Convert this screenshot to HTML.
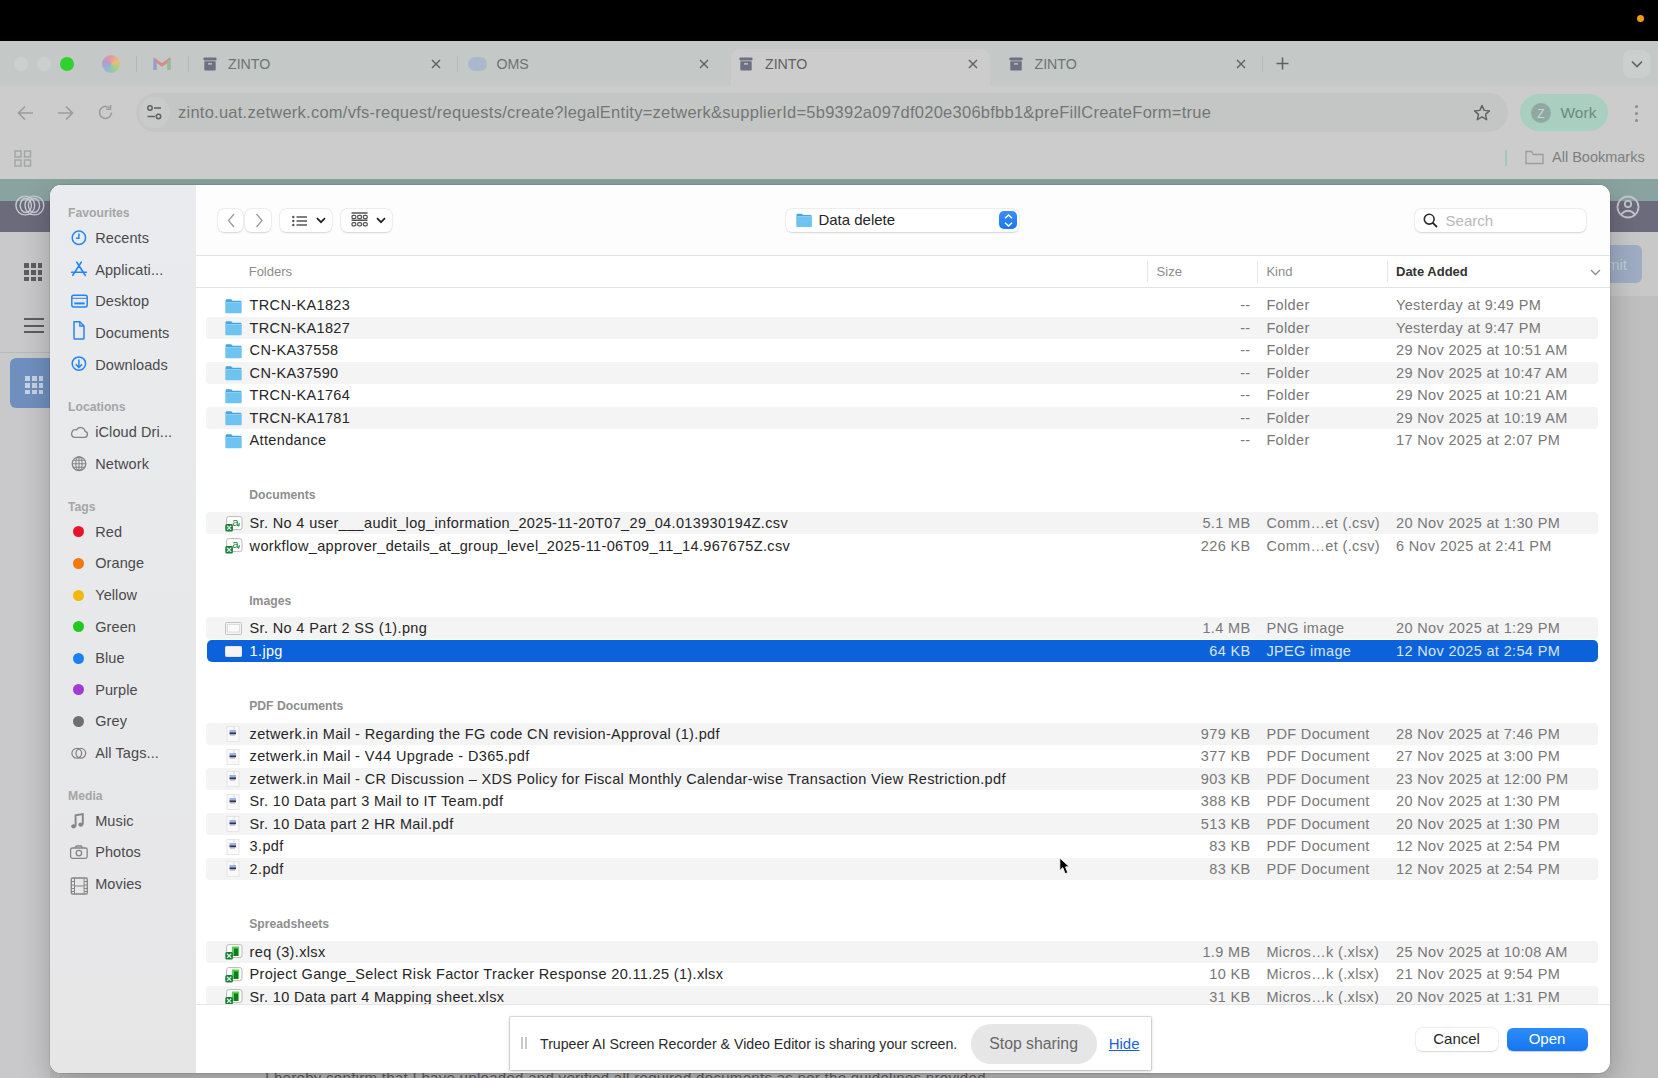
<!DOCTYPE html>
<html><head><meta charset="utf-8"><title>Open</title>
<style>
html,body{margin:0;padding:0;width:1658px;height:1078px;overflow:hidden;background:#c9c9cb;}
body{position:relative;font-family:"Liberation Sans",sans-serif;}
.r{position:absolute;}
.t{position:absolute;white-space:nowrap;}
svg.r{overflow:visible;}
</style></head><body>
<div class="r" style="left:0px;top:0px;width:1658px;height:41px;background:#000;"></div>
<div class="r" style="left:1637px;top:14.5px;width:7px;height:7px;border-radius:50%;background:#f29a1c"></div>
<div class="r" style="left:0px;top:41px;width:1658px;height:45px;background:#c4c9c7;"></div>
<div class="r" style="left:0px;top:86px;width:1658px;height:93px;background:#cbcccb;"></div>
<div class="r" style="left:731px;top:49px;width:259px;height:40px;background:#cbcccb;border-radius:9px 9px 0 0"></div>
<div class="r" style="left:14px;top:57px;width:14px;height:14px;border-radius:50%;background:#cbcfcd;"></div>
<div class="r" style="left:37px;top:57px;width:14px;height:14px;border-radius:50%;background:#cbcfcd;"></div>
<div class="r" style="left:59.5px;top:57px;width:14px;height:14px;border-radius:50%;background:#2fd12f;"></div>
<div class="r" style="left:102px;top:55px;width:18px;height:18px;border-radius:50%;background:conic-gradient(#e59a9a,#e6c07a,#9ccf8f,#8fb8d8,#b59ad0,#e59a9a)"></div>
<div class="r" style="left:136px;top:56px;width:1px;height:16px;background:#b5bab8;"></div>
<svg class="r" style="left:153px;top:57px" width="18" height="14" viewBox="0 0 18 14"><path d="M2 13V3l7 5 7-5v10" fill="none" stroke="#d88a8a" stroke-width="3"/><path d="M2 13V3" stroke="#8aa3d6" stroke-width="3"/><path d="M16 13V3" stroke="#8cc29a" stroke-width="3"/></svg>
<div class="r" style="left:188px;top:56px;width:1px;height:16px;background:#b5bab8;"></div>
<svg class="r" style="left:203px;top:57px" width="14" height="14" viewBox="0 0 14 14"><rect x="0.5" y="0.5" width="13" height="3" rx="0.8" fill="#6e7082"/><rect x="1.3" y="4.3" width="11.4" height="9.2" rx="0.8" fill="#6e7082"/><rect x="5" y="6.2" width="4" height="1.4" fill="#c4c9c7"/></svg>
<div class="t" style="top:57.18px;font-size:14.2px;line-height:14.2px;color:#6f7372;left:228.00px;">ZINTO</div>
<svg class="r" style="left:431px;top:59px" width="10" height="10" viewBox="0 0 10 10"><path d="M1 1L9 9M9 1L1 9" stroke="#5d6160" stroke-width="1.4"/></svg>
<div class="r" style="left:457px;top:56px;width:1px;height:16px;background:#b5bab8;"></div>
<div class="r" style="left:468px;top:57px;width:19px;height:14px;border-radius:7px;background:#a9b8cf"></div>
<div class="t" style="top:57.18px;font-size:14.2px;line-height:14.2px;color:#6f7372;left:496.50px;">OMS</div>
<svg class="r" style="left:699px;top:59px" width="10" height="10" viewBox="0 0 10 10"><path d="M1 1L9 9M9 1L1 9" stroke="#5d6160" stroke-width="1.4"/></svg>
<svg class="r" style="left:739px;top:57px" width="14" height="14" viewBox="0 0 14 14"><rect x="0.5" y="0.5" width="13" height="3" rx="0.8" fill="#6e7082"/><rect x="1.3" y="4.3" width="11.4" height="9.2" rx="0.8" fill="#6e7082"/><rect x="5" y="6.2" width="4" height="1.4" fill="#c4c9c7"/></svg>
<div class="t" style="top:57.18px;font-size:14.2px;line-height:14.2px;color:#5f6362;left:765.00px;">ZINTO</div>
<svg class="r" style="left:968px;top:59px" width="10" height="10" viewBox="0 0 10 10"><path d="M1 1L9 9M9 1L1 9" stroke="#5d6160" stroke-width="1.4"/></svg>
<svg class="r" style="left:1009px;top:57px" width="14" height="14" viewBox="0 0 14 14"><rect x="0.5" y="0.5" width="13" height="3" rx="0.8" fill="#6e7082"/><rect x="1.3" y="4.3" width="11.4" height="9.2" rx="0.8" fill="#6e7082"/><rect x="5" y="6.2" width="4" height="1.4" fill="#c4c9c7"/></svg>
<div class="t" style="top:57.18px;font-size:14.2px;line-height:14.2px;color:#6f7372;left:1034.50px;">ZINTO</div>
<svg class="r" style="left:1236px;top:59px" width="10" height="10" viewBox="0 0 10 10"><path d="M1 1L9 9M9 1L1 9" stroke="#5d6160" stroke-width="1.4"/></svg>
<div class="r" style="left:1262px;top:56px;width:1px;height:16px;background:#b5bab8;"></div>
<svg class="r" style="left:1276px;top:57px" width="13" height="13" viewBox="0 0 13 13"><path d="M6.5 0.5V12.5M0.5 6.5H12.5" stroke="#5d6160" stroke-width="1.5"/></svg>
<div class="r" style="left:1623px;top:50px;width:27px;height:28px;border-radius:8px;background:#cbcfcd"></div>
<svg class="r" style="left:1631px;top:60px" width="12" height="8" viewBox="0 0 12 8"><path d="M1 1.5L6 6.5L11 1.5" fill="none" stroke="#5d6160" stroke-width="1.6"/></svg>
<svg class="r" style="left:17px;top:105px" width="17" height="16" viewBox="0 0 17 16"><path d="M16 8H2M8 1.5L1.5 8L8 14.5" fill="none" stroke="#9a9d9c" stroke-width="1.6"/></svg>
<svg class="r" style="left:57px;top:105px" width="17" height="16" viewBox="0 0 17 16"><path d="M1 8H15M9 1.5L15.5 8L9 14.5" fill="none" stroke="#9a9d9c" stroke-width="1.6"/></svg>
<svg class="r" style="left:97px;top:104px" width="17" height="17" viewBox="0 0 17 17"><path d="M14.5 8.5A6 6 0 1 1 12.5 4" fill="none" stroke="#9a9d9c" stroke-width="1.6"/><path d="M13.5 1V5.2H9.3" fill="none" stroke="#9a9d9c" stroke-width="1.6"/></svg>
<div class="r" style="left:136px;top:93px;width:1372px;height:39px;border-radius:20px;background:#c3c6c5"></div>
<div class="r" style="left:139px;top:97px;width:31px;height:31px;border-radius:50%;background:#c8cbca"></div>
<svg class="r" style="left:146px;top:104px" width="17" height="17" viewBox="0 0 17 17"><circle cx="4" cy="4" r="2.2" fill="none" stroke="#5d6160" stroke-width="1.5"/><path d="M8 4H15" stroke="#5d6160" stroke-width="1.5"/><circle cx="12.5" cy="12.5" r="2.2" fill="none" stroke="#5d6160" stroke-width="1.5"/><path d="M1.5 12.5H9" stroke="#5d6160" stroke-width="1.5"/></svg>
<div class="t" style="top:104.33px;font-size:16.5px;line-height:16.5px;color:#737675;letter-spacing:0.25px;left:178.00px;">zinto.uat.zetwerk.com/vfs-request/requests/create?legalEntity=zetwerk&amp;supplierId=5b9392a097df020e306bfbb1&amp;preFillCreateForm=true</div>
<svg class="r" style="left:1473px;top:104px" width="18" height="18" viewBox="0 0 18 18"><path d="M9 1.5L11.2 6.4L16.5 6.9L12.5 10.4L13.7 15.7L9 12.9L4.3 15.7L5.5 10.4L1.5 6.9L6.8 6.4Z" fill="none" stroke="#5d6160" stroke-width="1.4" stroke-linejoin="round"/></svg>
<div class="r" style="left:1520px;top:94px;width:88px;height:37px;border-radius:19px;background:#a9cfc1"></div>
<div class="r" style="left:1531px;top:103px;width:20px;height:20px;border-radius:50%;background:#8fa9a2"></div>
<div class="t" style="top:107.84px;font-size:12px;line-height:12px;color:#c9d6d2;left:1341.00px;width:400px;text-align:center;">Z</div>
<div class="t" style="top:105.38px;font-size:15.5px;line-height:15.5px;color:#6d8a82;left:1560.50px;">Work</div>
<div class="r" style="left:1634.5px;top:104.5px;width:3px;height:3px;border-radius:50%;background:#888b8a"></div>
<div class="r" style="left:1634.5px;top:111.5px;width:3px;height:3px;border-radius:50%;background:#888b8a"></div>
<div class="r" style="left:1634.5px;top:118.5px;width:3px;height:3px;border-radius:50%;background:#888b8a"></div>
<svg class="r" style="left:14px;top:150px" width="18" height="17" viewBox="0 0 18 17"><rect x="1" y="1" width="6" height="6" fill="none" stroke="#a3a6a5" stroke-width="1.5"/><rect x="10.5" y="1" width="6" height="6" fill="none" stroke="#a3a6a5" stroke-width="1.5"/><rect x="1" y="10" width="6" height="6" fill="none" stroke="#a3a6a5" stroke-width="1.5"/><rect x="10.5" y="10" width="6" height="6" fill="none" stroke="#a3a6a5" stroke-width="1.5"/></svg>
<div class="r" style="left:1505px;top:150px;width:1.5px;height:16px;background:#9fc9bb;"></div>
<svg class="r" style="left:1525px;top:150px" width="19" height="15" viewBox="0 0 19 15"><path d="M1 2.5V13.5H18V4.5H8.5L6.5 1.5H1Z" fill="none" stroke="#9a9d9c" stroke-width="1.3"/></svg>
<div class="t" style="top:150.23px;font-size:14.5px;line-height:14.5px;color:#7d807f;left:1552.00px;">All Bookmarks</div>
<div class="r" style="left:0px;top:179px;width:1658px;height:22px;background:#89a4a0;"></div>
<div class="r" style="left:0px;top:201px;width:1658px;height:31px;background:#6b6b7c;"></div>
<div class="r" style="left:0px;top:232px;width:1658px;height:846px;background:#c9c9cb;"></div>
<div class="r" style="left:50px;top:232px;width:1608px;height:64px;background:#c8c8c9;"></div>
<div class="r" style="left:50px;top:296px;width:1608px;height:1px;background:#c0c0c1;"></div>
<div class="r" style="left:50px;top:297px;width:1608px;height:781px;background:#bfbfc0;"></div>
<svg class="r" style="left:10px;top:192px" width="40" height="28" viewBox="0 0 40 28"><circle cx="15.3" cy="13.5" r="9.4" fill="none" stroke="#c9cbd3" stroke-width="1.4"/><ellipse cx="15.8" cy="13.5" rx="5.6" ry="7" fill="none" stroke="#c9cbd3" stroke-width="1.4"/><circle cx="24.4" cy="13.5" r="9.4" fill="none" stroke="#c9cbd3" stroke-width="1.4"/><ellipse cx="24" cy="13.5" rx="5.6" ry="7" fill="none" stroke="#c9cbd3" stroke-width="1.4"/></svg>
<svg class="r" style="left:1615px;top:195px" width="26" height="24" viewBox="0 0 26 24"><circle cx="13" cy="12" r="10.5" fill="none" stroke="#c3c5cc" stroke-width="1.8"/><circle cx="13" cy="9" r="3.2" fill="none" stroke="#c3c5cc" stroke-width="1.8"/><path d="M6 19.5Q13 12 20 19.5" fill="none" stroke="#c3c5cc" stroke-width="1.8"/></svg>
<div class="r" style="left:24.0px;top:263.0px;width:4.8px;height:4.8px;background:#5e5e60;"></div>
<div class="r" style="left:30.8px;top:263.0px;width:4.8px;height:4.8px;background:#5e5e60;"></div>
<div class="r" style="left:37.6px;top:263.0px;width:4.8px;height:4.8px;background:#5e5e60;"></div>
<div class="r" style="left:24.0px;top:269.8px;width:4.8px;height:4.8px;background:#5e5e60;"></div>
<div class="r" style="left:30.8px;top:269.8px;width:4.8px;height:4.8px;background:#5e5e60;"></div>
<div class="r" style="left:37.6px;top:269.8px;width:4.8px;height:4.8px;background:#5e5e60;"></div>
<div class="r" style="left:24.0px;top:276.6px;width:4.8px;height:4.8px;background:#5e5e60;"></div>
<div class="r" style="left:30.8px;top:276.6px;width:4.8px;height:4.8px;background:#5e5e60;"></div>
<div class="r" style="left:37.6px;top:276.6px;width:4.8px;height:4.8px;background:#5e5e60;"></div>
<div class="r" style="left:24px;top:318.0px;width:20px;height:2px;background:#5e5e60;"></div>
<div class="r" style="left:24px;top:324.5px;width:20px;height:2px;background:#5e5e60;"></div>
<div class="r" style="left:24px;top:331.0px;width:20px;height:2px;background:#5e5e60;"></div>
<div class="r" style="left:0px;top:352px;width:50px;height:1px;background:#b9b9ba;"></div>
<div class="r" style="left:10px;top:358px;width:45px;height:50px;border-radius:6px;background:#6f90bf"></div>
<div class="r" style="left:25.0px;top:376.0px;width:4.8px;height:4.8px;background:#c9d3e3;"></div>
<div class="r" style="left:31.8px;top:376.0px;width:4.8px;height:4.8px;background:#c9d3e3;"></div>
<div class="r" style="left:38.6px;top:376.0px;width:4.8px;height:4.8px;background:#c9d3e3;"></div>
<div class="r" style="left:25.0px;top:382.8px;width:4.8px;height:4.8px;background:#c9d3e3;"></div>
<div class="r" style="left:31.8px;top:382.8px;width:4.8px;height:4.8px;background:#c9d3e3;"></div>
<div class="r" style="left:38.6px;top:382.8px;width:4.8px;height:4.8px;background:#c9d3e3;"></div>
<div class="r" style="left:25.0px;top:389.6px;width:4.8px;height:4.8px;background:#c9d3e3;"></div>
<div class="r" style="left:31.8px;top:389.6px;width:4.8px;height:4.8px;background:#c9d3e3;"></div>
<div class="r" style="left:38.6px;top:389.6px;width:4.8px;height:4.8px;background:#c9d3e3;"></div>
<div class="r" style="left:1610px;top:245px;width:32px;height:38px;border-radius:0 6px 6px 0;background:#9eadc4"></div>
<div class="t" style="top:257.30px;font-size:15px;line-height:15px;color:#c3ccda;right:31.00px;text-align:right;">Submit</div>
<div class="t" style="top:1070.30px;font-size:15px;line-height:15px;color:#606060;letter-spacing:0.3px;left:265.00px;">I hereby confirm that I have uploaded and verified all required documents as per the guidelines provided.</div>
<div class="r" style="left:0;top:179px;width:1658px;height:899px;overflow:hidden"><div class="r" style="left:50px;top:6px;width:1560px;height:887.5px;border-radius:11px;background:#fff;box-shadow:0 0 0 0.5px rgba(0,0,0,0.16),0 10px 30px rgba(0,0,0,0.24);overflow:hidden"><div class="r" style="left:0;top:0;width:146px;height:100%;background:linear-gradient(#eaebee,#e6e6e7)"></div></div></div>
<div class="t" style="top:207.17px;font-size:12.2px;line-height:12.2px;color:#a5a5a6;font-weight:700;left:68.00px;">Favourites</div>
<div class="t" style="top:231.13px;font-size:14.5px;line-height:14.5px;color:#4a4a4b;letter-spacing:0.1px;left:95.20px;">Recents</div>
<div class="t" style="top:262.73px;font-size:14.5px;line-height:14.5px;color:#4a4a4b;letter-spacing:0.1px;left:95.20px;">Applicati...</div>
<div class="t" style="top:294.33px;font-size:14.5px;line-height:14.5px;color:#4a4a4b;letter-spacing:0.1px;left:95.20px;">Desktop</div>
<div class="t" style="top:325.93px;font-size:14.5px;line-height:14.5px;color:#4a4a4b;letter-spacing:0.1px;left:95.20px;">Documents</div>
<div class="t" style="top:357.53px;font-size:14.5px;line-height:14.5px;color:#4a4a4b;letter-spacing:0.1px;left:95.20px;">Downloads</div>
<svg class="r" style="left:0;top:0" width="200" height="1078" viewBox="0 0 200 1078"><circle cx="78.9" cy="237.7" r="6.7" fill="none" stroke="#2486f5" stroke-width="1.5"/><path d="M78.9 233.6V238.2H76" fill="none" stroke="#2486f5" stroke-width="1.5"/><path d="M76.8 262.2L85.2 275.3M81.2 262.2L72.8 275.3M71.6 272.2H86.4" fill="none" stroke="#2486f5" stroke-width="1.6" stroke-linecap="round"/><rect x="71.8" y="295.3" width="15.4" height="11.6" rx="1.8" fill="none" stroke="#2486f5" stroke-width="1.5"/><path d="M71.8 298.3H87.2" stroke="#2486f5" stroke-width="1"/><rect x="74.3" y="302.4" width="10.4" height="2" fill="#2486f5"/><path d="M74 321.8H79.8L84 326V338.3Q84 339.1 83.2 339.1H74.8Q74 339.1 74 338.3Z" fill="none" stroke="#2486f5" stroke-width="1.5" stroke-linejoin="round"/><path d="M79.8 321.8V326H84" fill="none" stroke="#2486f5" stroke-width="1.3"/><circle cx="78.9" cy="363.6" r="6.7" fill="none" stroke="#2486f5" stroke-width="1.5"/><path d="M78.9 359.4V367.2M75.8 364.4L78.9 367.5L82 364.4" fill="none" stroke="#2486f5" stroke-width="1.5"/></svg>
<div class="t" style="top:401.37px;font-size:12.2px;line-height:12.2px;color:#a5a5a6;font-weight:700;left:68.00px;">Locations</div>
<div class="t" style="top:425.33px;font-size:14.5px;line-height:14.5px;color:#4a4a4b;letter-spacing:0.1px;left:95.20px;">iCloud Dri...</div>
<div class="t" style="top:456.93px;font-size:14.5px;line-height:14.5px;color:#4a4a4b;letter-spacing:0.1px;left:95.20px;">Network</div>
<svg class="r" style="left:0;top:0" width="200" height="1078" viewBox="0 0 200 1078"><path d="M74.3 437.3H84.6A3 3 0 0 0 85.2 431.4A4.8 4.8 0 0 0 76.4 429.8A3.9 3.9 0 0 0 74.3 437.3Z" fill="none" stroke="#858585" stroke-width="1.3"/><circle cx="79" cy="463.7" r="6.8" fill="none" stroke="#858585" stroke-width="1.3"/><ellipse cx="79" cy="463.7" rx="3.2" ry="6.8" fill="none" stroke="#858585" stroke-width="1.1"/><path d="M72.2 463.7H85.8M73.3 460.2H84.7M73.3 467.2H84.7M79 456.9V470.5" stroke="#858585" stroke-width="1.1"/></svg>
<div class="t" style="top:500.77px;font-size:12.2px;line-height:12.2px;color:#a5a5a6;font-weight:700;left:68.00px;">Tags</div>
<div class="t" style="top:524.73px;font-size:14.5px;line-height:14.5px;color:#4a4a4b;letter-spacing:0.1px;left:95.20px;">Red</div>
<div class="r" style="left:73.4px;top:526.30px;width:11px;height:11px;border-radius:50%;background:#e8142a"></div>
<div class="t" style="top:556.33px;font-size:14.5px;line-height:14.5px;color:#4a4a4b;letter-spacing:0.1px;left:95.20px;">Orange</div>
<div class="r" style="left:73.4px;top:557.90px;width:11px;height:11px;border-radius:50%;background:#f2780f"></div>
<div class="t" style="top:587.93px;font-size:14.5px;line-height:14.5px;color:#4a4a4b;letter-spacing:0.1px;left:95.20px;">Yellow</div>
<div class="r" style="left:73.4px;top:589.50px;width:11px;height:11px;border-radius:50%;background:#f2b90c"></div>
<div class="t" style="top:619.53px;font-size:14.5px;line-height:14.5px;color:#4a4a4b;letter-spacing:0.1px;left:95.20px;">Green</div>
<div class="r" style="left:73.4px;top:621.10px;width:11px;height:11px;border-radius:50%;background:#22c91f"></div>
<div class="t" style="top:651.13px;font-size:14.5px;line-height:14.5px;color:#4a4a4b;letter-spacing:0.1px;left:95.20px;">Blue</div>
<div class="r" style="left:73.4px;top:652.70px;width:11px;height:11px;border-radius:50%;background:#1882f5"></div>
<div class="t" style="top:682.73px;font-size:14.5px;line-height:14.5px;color:#4a4a4b;letter-spacing:0.1px;left:95.20px;">Purple</div>
<div class="r" style="left:73.4px;top:684.30px;width:11px;height:11px;border-radius:50%;background:#a43ad6"></div>
<div class="t" style="top:714.33px;font-size:14.5px;line-height:14.5px;color:#4a4a4b;letter-spacing:0.1px;left:95.20px;">Grey</div>
<div class="r" style="left:73.4px;top:715.90px;width:11px;height:11px;border-radius:50%;background:#6f6f70"></div>
<div class="t" style="top:745.93px;font-size:14.5px;line-height:14.5px;color:#4a4a4b;letter-spacing:0.1px;left:95.20px;">All Tags...</div>
<svg class="r" style="left:0;top:0" width="200" height="1078" viewBox="0 0 200 1078"><circle cx="76.8" cy="753.3" r="4.9" fill="none" stroke="#858585" stroke-width="1.3"/><circle cx="80.8" cy="753.3" r="4.9" fill="none" stroke="#858585" stroke-width="1.3"/></svg>
<div class="t" style="top:790.07px;font-size:12.2px;line-height:12.2px;color:#a5a5a6;font-weight:700;left:68.00px;">Media</div>
<div class="t" style="top:813.73px;font-size:14.5px;line-height:14.5px;color:#4a4a4b;letter-spacing:0.1px;left:95.20px;">Music</div>
<div class="t" style="top:845.33px;font-size:14.5px;line-height:14.5px;color:#4a4a4b;letter-spacing:0.1px;left:95.20px;">Photos</div>
<div class="t" style="top:876.93px;font-size:14.5px;line-height:14.5px;color:#4a4a4b;letter-spacing:0.1px;left:95.20px;">Movies</div>
<svg class="r" style="left:0;top:0" width="200" height="1078" viewBox="0 0 200 1078"><path d="M75.6 826.2V815.2L82.8 814V824.5" fill="none" stroke="#858585" stroke-width="1.9"/><ellipse cx="73.6" cy="826.3" rx="2.4" ry="2.1" fill="#858585"/><ellipse cx="80.8" cy="824.7" rx="2.4" ry="2.1" fill="#858585"/><rect x="70.6" y="848" width="16.6" height="10.4" rx="1.8" fill="none" stroke="#858585" stroke-width="1.3"/><path d="M75 848L76.3 846H81.3L82.6 848" fill="none" stroke="#858585" stroke-width="1.3"/><circle cx="78.9" cy="853.1" r="2.8" fill="none" stroke="#858585" stroke-width="1.3"/><rect x="71.3" y="878" width="16" height="16" rx="1.2" fill="none" stroke="#858585" stroke-width="1.3"/><path d="M74.5 878V894M84.1 878V894M74.5 886H84.1M71.3 881.5H74.5M71.3 885H74.5M71.3 888.5H74.5M71.3 891.5H74.5M84.1 881.5H87.3M84.1 885H87.3M84.1 888.5H87.3M84.1 891.5H87.3" fill="none" stroke="#858585" stroke-width="1"/></svg>
<div class="r" style="left:196px;top:185px;width:1414px;height:70px;background:#fdfdfe;border-top-right-radius:11px;"></div>
<div class="r" style="left:217.6px;top:208.5px;width:25.700000000000017px;height:23.0px;border-radius:6px;background:#fff;box-shadow:0 0 0 0.5px rgba(0,0,0,0.07),0 0.8px 1.8px rgba(0,0,0,0.13);"></div>
<div class="r" style="left:245.3px;top:208.5px;width:25.69999999999999px;height:23.0px;border-radius:6px;background:#fff;box-shadow:0 0 0 0.5px rgba(0,0,0,0.07),0 0.8px 1.8px rgba(0,0,0,0.13);"></div>
<svg class="r" style="left:226.5px;top:212.5px" width="9" height="15" viewBox="0 0 9 15"><path d="M7 1L1.5 7.5L7 14" fill="none" stroke="#9b9b9b" stroke-width="1.3"/></svg>
<svg class="r" style="left:254.5px;top:212.5px" width="9" height="15" viewBox="0 0 9 15"><path d="M1.5 1L7 7.5L1.5 14" fill="none" stroke="#9b9b9b" stroke-width="1.3"/></svg>
<div class="r" style="left:279.8px;top:208.5px;width:52.0px;height:23.0px;border-radius:6px;background:#fff;box-shadow:0 0 0 0.5px rgba(0,0,0,0.07),0 0.8px 1.8px rgba(0,0,0,0.13);"></div>
<div class="r" style="left:341.3px;top:208.5px;width:50.69999999999999px;height:23.0px;border-radius:6px;background:#fff;box-shadow:0 0 0 0.5px rgba(0,0,0,0.07),0 0.8px 1.8px rgba(0,0,0,0.13);"></div>
<svg class="r" style="left:291.5px;top:214.5px" width="16" height="12" viewBox="0 0 16 12"><circle cx="1.3" cy="2" r="1.2" fill="#555"/><circle cx="1.3" cy="6" r="1.2" fill="#555"/><circle cx="1.3" cy="10" r="1.2" fill="#555"/><path d="M4.5 2H15M4.5 6H15M4.5 10H15" stroke="#555" stroke-width="1.4"/></svg>
<svg class="r" style="left:316px;top:217px" width="10" height="7" viewBox="0 0 10 7"><path d="M1 1.2L5 5.2L9 1.2" fill="none" stroke="#222" stroke-width="1.7"/></svg>
<svg class="r" style="left:351px;top:212px" width="17" height="15" viewBox="0 0 17 15"><path d="M0.5 1H16.5M0.5 8.2H16.5" stroke="#555" stroke-width="1.5"/><rect x="1" y="3.4" width="3.8" height="3.3" rx="1.1" fill="none" stroke="#555" stroke-width="1.25"/><rect x="6.7" y="3.4" width="3.8" height="3.3" rx="1.1" fill="none" stroke="#555" stroke-width="1.25"/><rect x="12.4" y="3.4" width="3.8" height="3.3" rx="1.1" fill="none" stroke="#555" stroke-width="1.25"/><rect x="1" y="10.6" width="3.8" height="3.3" rx="1.1" fill="none" stroke="#555" stroke-width="1.25"/><rect x="6.7" y="10.6" width="3.8" height="3.3" rx="1.1" fill="none" stroke="#555" stroke-width="1.25"/><rect x="12.4" y="10.6" width="3.8" height="3.3" rx="1.1" fill="none" stroke="#555" stroke-width="1.25"/></svg>
<svg class="r" style="left:375.5px;top:217px" width="10" height="7" viewBox="0 0 10 7"><path d="M1 1.2L5 5.2L9 1.2" fill="none" stroke="#222" stroke-width="1.7"/></svg>
<div class="r" style="left:786px;top:208.7px;width:233px;height:23.0px;border-radius:6px;background:#fff;box-shadow:0 0 0 0.5px rgba(0,0,0,0.07),0 0.8px 1.8px rgba(0,0,0,0.13);"></div>
<svg class="r" style="left:795.8px;top:213.3px" width="16.2" height="14.6" viewBox="0 0 17 14.6"><path d="M0.6 1.2Q0.6 0.3 1.5 0.3H6.2L7.6 1.8H15.6Q16.4 1.8 16.4 2.6V3.5H0.6Z" fill="#4aa3dc"/><rect x="0.3" y="3" width="16.4" height="11.3" rx="1" fill="#6ec3f0"/><rect x="0.3" y="3" width="16.4" height="1" fill="#8ad0f5"/></svg>
<div class="t" style="top:211.70px;font-size:15px;line-height:15px;color:#262626;left:818.40px;">Data delete</div>
<div class="r" style="left:999.4px;top:211.3px;width:18.1px;height:17.7px;border-radius:5px;background:linear-gradient(#3a8ff8,#1a76ee)"></div>
<svg class="r" style="left:1004px;top:213.6px" width="9" height="13" viewBox="0 0 9 13"><path d="M1 4.2L4.5 1L8 4.2M1 8.8L4.5 12L8 8.8" fill="none" stroke="#fff" stroke-width="1.5"/></svg>
<div class="r" style="left:1415px;top:209.4px;width:171px;height:22.19999999999999px;border-radius:6px;background:#fff;box-shadow:0 0 0 0.5px rgba(0,0,0,0.07),0 0.8px 1.8px rgba(0,0,0,0.13);"></div>
<svg class="r" style="left:1422.5px;top:212.5px" width="15" height="15" viewBox="0 0 15 15"><circle cx="6.2" cy="6.2" r="4.9" fill="none" stroke="#2a2a2a" stroke-width="1.6"/><path d="M9.8 9.8L13.5 13.5" stroke="#2a2a2a" stroke-width="1.8" stroke-linecap="round"/></svg>
<div class="t" style="top:212.70px;font-size:15px;line-height:15px;color:#b9b9bb;left:1445.60px;">Search</div>
<div class="r" style="left:196px;top:255px;width:1414px;height:1px;background:#e3e3e3;"></div>
<div class="r" style="left:196px;top:287px;width:1414px;height:1px;background:#e3e3e3;"></div>
<div class="r" style="left:1147px;top:261px;width:1px;height:21px;background:#e6e6e6;"></div>
<div class="r" style="left:1257px;top:261px;width:1px;height:21px;background:#e6e6e6;"></div>
<div class="r" style="left:1387px;top:261px;width:1px;height:21px;background:#e6e6e6;"></div>
<div class="t" style="top:264.80px;font-size:13px;line-height:13px;color:#8c8c8c;left:248.70px;">Folders</div>
<div class="t" style="top:264.80px;font-size:13px;line-height:13px;color:#8c8c8c;left:1156.60px;">Size</div>
<div class="t" style="top:264.80px;font-size:13px;line-height:13px;color:#8c8c8c;left:1266.40px;">Kind</div>
<div class="t" style="top:264.80px;font-size:13px;line-height:13px;color:#333333;font-weight:700;left:1396.00px;">Date Added</div>
<svg class="r" style="left:1589.5px;top:269px" width="11" height="7" viewBox="0 0 11 7"><path d="M1 1L5.5 5.5L10 1" fill="none" stroke="#8a8a8a" stroke-width="1.3"/></svg>
<div class="r" style="left:0;top:288px;width:1658px;height:716.5px;overflow:hidden">
<svg class="r" style="left:225.2px;top:10.5px" width="17" height="14.6" viewBox="0 0 17 14.6"><path d="M0.6 1.2Q0.6 0.3 1.5 0.3H6.2L7.6 1.8H15.6Q16.4 1.8 16.4 2.6V3.5H0.6Z" fill="#4aa3dc"/><rect x="0.3" y="3" width="16.4" height="11.3" rx="1" fill="#6ec3f0"/><rect x="0.3" y="3" width="16.4" height="1" fill="#8ad0f5"/></svg>
<div class="t" style="top:10.13px;font-size:14.5px;line-height:14.5px;color:#262626;letter-spacing:0.35px;left:249.60px;">TRCN-KA1823</div>
<div class="t" style="top:10.13px;font-size:14.5px;line-height:14.5px;color:#787878;letter-spacing:0.35px;right:407.50px;text-align:right;">--</div>
<div class="t" style="top:10.13px;font-size:14.5px;line-height:14.5px;color:#787878;letter-spacing:0.35px;left:1266.40px;">Folder</div>
<div class="t" style="top:10.13px;font-size:14.5px;line-height:14.5px;color:#787878;letter-spacing:0.35px;left:1396.00px;">Yesterday at 9:49 PM</div>
<div class="r" style="left:206.3px;top:28.55px;width:1391.7px;height:22px;border-radius:4px;background:#f4f4f5"></div>
<svg class="r" style="left:225.2px;top:33.05000000000001px" width="17" height="14.6" viewBox="0 0 17 14.6"><path d="M0.6 1.2Q0.6 0.3 1.5 0.3H6.2L7.6 1.8H15.6Q16.4 1.8 16.4 2.6V3.5H0.6Z" fill="#4aa3dc"/><rect x="0.3" y="3" width="16.4" height="11.3" rx="1" fill="#6ec3f0"/><rect x="0.3" y="3" width="16.4" height="1" fill="#8ad0f5"/></svg>
<div class="t" style="top:32.68px;font-size:14.5px;line-height:14.5px;color:#262626;letter-spacing:0.35px;left:249.60px;">TRCN-KA1827</div>
<div class="t" style="top:32.68px;font-size:14.5px;line-height:14.5px;color:#787878;letter-spacing:0.35px;right:407.50px;text-align:right;">--</div>
<div class="t" style="top:32.68px;font-size:14.5px;line-height:14.5px;color:#787878;letter-spacing:0.35px;left:1266.40px;">Folder</div>
<div class="t" style="top:32.68px;font-size:14.5px;line-height:14.5px;color:#787878;letter-spacing:0.35px;left:1396.00px;">Yesterday at 9:47 PM</div>
<svg class="r" style="left:225.2px;top:55.60000000000002px" width="17" height="14.6" viewBox="0 0 17 14.6"><path d="M0.6 1.2Q0.6 0.3 1.5 0.3H6.2L7.6 1.8H15.6Q16.4 1.8 16.4 2.6V3.5H0.6Z" fill="#4aa3dc"/><rect x="0.3" y="3" width="16.4" height="11.3" rx="1" fill="#6ec3f0"/><rect x="0.3" y="3" width="16.4" height="1" fill="#8ad0f5"/></svg>
<div class="t" style="top:55.23px;font-size:14.5px;line-height:14.5px;color:#262626;letter-spacing:0.35px;left:249.60px;">CN-KA37558</div>
<div class="t" style="top:55.23px;font-size:14.5px;line-height:14.5px;color:#787878;letter-spacing:0.35px;right:407.50px;text-align:right;">--</div>
<div class="t" style="top:55.23px;font-size:14.5px;line-height:14.5px;color:#787878;letter-spacing:0.35px;left:1266.40px;">Folder</div>
<div class="t" style="top:55.23px;font-size:14.5px;line-height:14.5px;color:#787878;letter-spacing:0.35px;left:1396.00px;">29 Nov 2025 at 10:51 AM</div>
<div class="r" style="left:206.3px;top:73.65px;width:1391.7px;height:22px;border-radius:4px;background:#f4f4f5"></div>
<svg class="r" style="left:225.2px;top:78.14999999999998px" width="17" height="14.6" viewBox="0 0 17 14.6"><path d="M0.6 1.2Q0.6 0.3 1.5 0.3H6.2L7.6 1.8H15.6Q16.4 1.8 16.4 2.6V3.5H0.6Z" fill="#4aa3dc"/><rect x="0.3" y="3" width="16.4" height="11.3" rx="1" fill="#6ec3f0"/><rect x="0.3" y="3" width="16.4" height="1" fill="#8ad0f5"/></svg>
<div class="t" style="top:77.78px;font-size:14.5px;line-height:14.5px;color:#262626;letter-spacing:0.35px;left:249.60px;">CN-KA37590</div>
<div class="t" style="top:77.78px;font-size:14.5px;line-height:14.5px;color:#787878;letter-spacing:0.35px;right:407.50px;text-align:right;">--</div>
<div class="t" style="top:77.78px;font-size:14.5px;line-height:14.5px;color:#787878;letter-spacing:0.35px;left:1266.40px;">Folder</div>
<div class="t" style="top:77.78px;font-size:14.5px;line-height:14.5px;color:#787878;letter-spacing:0.35px;left:1396.00px;">29 Nov 2025 at 10:47 AM</div>
<svg class="r" style="left:225.2px;top:100.69999999999999px" width="17" height="14.6" viewBox="0 0 17 14.6"><path d="M0.6 1.2Q0.6 0.3 1.5 0.3H6.2L7.6 1.8H15.6Q16.4 1.8 16.4 2.6V3.5H0.6Z" fill="#4aa3dc"/><rect x="0.3" y="3" width="16.4" height="11.3" rx="1" fill="#6ec3f0"/><rect x="0.3" y="3" width="16.4" height="1" fill="#8ad0f5"/></svg>
<div class="t" style="top:100.33px;font-size:14.5px;line-height:14.5px;color:#262626;letter-spacing:0.35px;left:249.60px;">TRCN-KA1764</div>
<div class="t" style="top:100.33px;font-size:14.5px;line-height:14.5px;color:#787878;letter-spacing:0.35px;right:407.50px;text-align:right;">--</div>
<div class="t" style="top:100.33px;font-size:14.5px;line-height:14.5px;color:#787878;letter-spacing:0.35px;left:1266.40px;">Folder</div>
<div class="t" style="top:100.33px;font-size:14.5px;line-height:14.5px;color:#787878;letter-spacing:0.35px;left:1396.00px;">29 Nov 2025 at 10:21 AM</div>
<div class="r" style="left:206.3px;top:118.75px;width:1391.7px;height:22px;border-radius:4px;background:#f4f4f5"></div>
<svg class="r" style="left:225.2px;top:123.25px" width="17" height="14.6" viewBox="0 0 17 14.6"><path d="M0.6 1.2Q0.6 0.3 1.5 0.3H6.2L7.6 1.8H15.6Q16.4 1.8 16.4 2.6V3.5H0.6Z" fill="#4aa3dc"/><rect x="0.3" y="3" width="16.4" height="11.3" rx="1" fill="#6ec3f0"/><rect x="0.3" y="3" width="16.4" height="1" fill="#8ad0f5"/></svg>
<div class="t" style="top:122.88px;font-size:14.5px;line-height:14.5px;color:#262626;letter-spacing:0.35px;left:249.60px;">TRCN-KA1781</div>
<div class="t" style="top:122.88px;font-size:14.5px;line-height:14.5px;color:#787878;letter-spacing:0.35px;right:407.50px;text-align:right;">--</div>
<div class="t" style="top:122.88px;font-size:14.5px;line-height:14.5px;color:#787878;letter-spacing:0.35px;left:1266.40px;">Folder</div>
<div class="t" style="top:122.88px;font-size:14.5px;line-height:14.5px;color:#787878;letter-spacing:0.35px;left:1396.00px;">29 Nov 2025 at 10:19 AM</div>
<svg class="r" style="left:225.2px;top:145.8px" width="17" height="14.6" viewBox="0 0 17 14.6"><path d="M0.6 1.2Q0.6 0.3 1.5 0.3H6.2L7.6 1.8H15.6Q16.4 1.8 16.4 2.6V3.5H0.6Z" fill="#4aa3dc"/><rect x="0.3" y="3" width="16.4" height="11.3" rx="1" fill="#6ec3f0"/><rect x="0.3" y="3" width="16.4" height="1" fill="#8ad0f5"/></svg>
<div class="t" style="top:145.43px;font-size:14.5px;line-height:14.5px;color:#262626;letter-spacing:0.35px;left:249.60px;">Attendance</div>
<div class="t" style="top:145.43px;font-size:14.5px;line-height:14.5px;color:#787878;letter-spacing:0.35px;right:407.50px;text-align:right;">--</div>
<div class="t" style="top:145.43px;font-size:14.5px;line-height:14.5px;color:#787878;letter-spacing:0.35px;left:1266.40px;">Folder</div>
<div class="t" style="top:145.43px;font-size:14.5px;line-height:14.5px;color:#787878;letter-spacing:0.35px;left:1396.00px;">17 Nov 2025 at 2:07 PM</div>
<div class="t" style="top:201.47px;font-size:12.2px;line-height:12.2px;color:#8e8e8e;font-weight:700;left:249.20px;">Documents</div>
<div class="r" style="left:206.3px;top:224.00px;width:1391.7px;height:22px;border-radius:4px;background:#f4f4f5"></div>
<svg class="r" style="left:224.5px;top:227.60000000000002px" width="18" height="17" viewBox="0 0 18 17"><rect x="1.6" y="0.6" width="15.4" height="13" rx="2.2" fill="#fff" stroke="#b9b9b9" stroke-width="1"/><text x="7.3" y="9.6" font-family="Liberation Sans" font-size="11.5" fill="#1d7a36">a</text><path d="M14.6 7.2L13.4 10.4" stroke="#2a9a45" stroke-width="1.3"/><rect x="0.3" y="8" width="7.6" height="7.6" rx="1.5" fill="#1a7a3c"/><path d="M2 9.8L6.2 13.9M6.2 9.8L2 13.9" stroke="#d6f5df" stroke-width="1.3"/></svg>
<div class="t" style="top:228.13px;font-size:14.5px;line-height:14.5px;color:#262626;letter-spacing:0.35px;left:249.60px;">Sr. No 4 user___audit_log_information_2025-11-20T07_29_04.013930194Z.csv</div>
<div class="t" style="top:228.13px;font-size:14.5px;line-height:14.5px;color:#787878;letter-spacing:0.35px;right:407.50px;text-align:right;">5.1 MB</div>
<div class="t" style="top:228.13px;font-size:14.5px;line-height:14.5px;color:#787878;letter-spacing:0.35px;left:1266.40px;">Comm…et (.csv)</div>
<div class="t" style="top:228.13px;font-size:14.5px;line-height:14.5px;color:#787878;letter-spacing:0.35px;left:1396.00px;">20 Nov 2025 at 1:30 PM</div>
<svg class="r" style="left:224.5px;top:250.14999999999998px" width="18" height="17" viewBox="0 0 18 17"><rect x="1.6" y="0.6" width="15.4" height="13" rx="2.2" fill="#fff" stroke="#b9b9b9" stroke-width="1"/><text x="7.3" y="9.6" font-family="Liberation Sans" font-size="11.5" fill="#1d7a36">a</text><path d="M14.6 7.2L13.4 10.4" stroke="#2a9a45" stroke-width="1.3"/><rect x="0.3" y="8" width="7.6" height="7.6" rx="1.5" fill="#1a7a3c"/><path d="M2 9.8L6.2 13.9M6.2 9.8L2 13.9" stroke="#d6f5df" stroke-width="1.3"/></svg>
<div class="t" style="top:250.68px;font-size:14.5px;line-height:14.5px;color:#262626;letter-spacing:0.35px;left:249.60px;">workflow_approver_details_at_group_level_2025-11-06T09_11_14.967675Z.csv</div>
<div class="t" style="top:250.68px;font-size:14.5px;line-height:14.5px;color:#787878;letter-spacing:0.35px;right:407.50px;text-align:right;">226 KB</div>
<div class="t" style="top:250.68px;font-size:14.5px;line-height:14.5px;color:#787878;letter-spacing:0.35px;left:1266.40px;">Comm…et (.csv)</div>
<div class="t" style="top:250.68px;font-size:14.5px;line-height:14.5px;color:#787878;letter-spacing:0.35px;left:1396.00px;">6 Nov 2025 at 2:41 PM</div>
<div class="t" style="top:306.72px;font-size:12.2px;line-height:12.2px;color:#8e8e8e;font-weight:700;left:249.20px;">Images</div>
<div class="r" style="left:206.3px;top:329.25px;width:1391.7px;height:22px;border-radius:4px;background:#f4f4f5"></div>
<svg class="r" style="left:225px;top:334.25px" width="17" height="13" viewBox="0 0 17 13"><rect x="0.5" y="0.5" width="16" height="12" rx="1" fill="#f3f3f3" stroke="#c2c2c2" stroke-width="1"/><rect x="2.5" y="2.5" width="12" height="7.5" fill="#fafafa" stroke="#d6d6d6" stroke-width="0.8"/></svg>
<div class="t" style="top:333.38px;font-size:14.5px;line-height:14.5px;color:#262626;letter-spacing:0.35px;left:249.60px;">Sr. No 4 Part 2 SS (1).png</div>
<div class="t" style="top:333.38px;font-size:14.5px;line-height:14.5px;color:#787878;letter-spacing:0.35px;right:407.50px;text-align:right;">1.4 MB</div>
<div class="t" style="top:333.38px;font-size:14.5px;line-height:14.5px;color:#787878;letter-spacing:0.35px;left:1266.40px;">PNG image</div>
<div class="t" style="top:333.38px;font-size:14.5px;line-height:14.5px;color:#787878;letter-spacing:0.35px;left:1396.00px;">20 Nov 2025 at 1:29 PM</div>
<div class="r" style="left:206.5px;top:351.80px;width:1391.5px;height:22px;border-radius:5px;background:#0b62da"></div>
<svg class="r" style="left:225px;top:357.79999999999995px" width="17" height="11" viewBox="0 0 17 11"><rect x="0.5" y="0.5" width="16" height="10" rx="0.8" fill="#f4f4f6" stroke="#e4e4ee" stroke-width="1"/></svg>
<div class="t" style="top:355.93px;font-size:14.5px;line-height:14.5px;color:#fff;letter-spacing:0.35px;left:249.60px;">1.jpg</div>
<div class="t" style="top:355.93px;font-size:14.5px;line-height:14.5px;color:#d8e4fa;letter-spacing:0.35px;right:407.50px;text-align:right;">64 KB</div>
<div class="t" style="top:355.93px;font-size:14.5px;line-height:14.5px;color:#d8e4fa;letter-spacing:0.35px;left:1266.40px;">JPEG image</div>
<div class="t" style="top:355.93px;font-size:14.5px;line-height:14.5px;color:#d8e4fa;letter-spacing:0.35px;left:1396.00px;">12 Nov 2025 at 2:54 PM</div>
<div class="t" style="top:411.97px;font-size:12.2px;line-height:12.2px;color:#8e8e8e;font-weight:700;left:249.20px;">PDF Documents</div>
<div class="r" style="left:206.3px;top:434.50px;width:1391.7px;height:22px;border-radius:4px;background:#f4f4f5"></div>
<svg class="r" style="left:226px;top:438.0px" width="14" height="16" viewBox="0 0 14 16"><rect x="1" y="0.5" width="12" height="15" fill="#f9f9f9" stroke="#e2e2e2" stroke-width="0.8"/><rect x="3.5" y="4" width="6.5" height="2" fill="#97b5ef"/><rect x="3.5" y="6.3" width="6.5" height="2" fill="#2e3550"/><rect x="4" y="8.5" width="5" height="1" fill="#9aa0b5"/><path d="M8 0.5V4" stroke="#c8c8c8" stroke-width="0.6"/></svg>
<div class="t" style="top:438.63px;font-size:14.5px;line-height:14.5px;color:#262626;letter-spacing:0.35px;left:249.60px;">zetwerk.in Mail - Regarding the FG code CN revision-Approval (1).pdf</div>
<div class="t" style="top:438.63px;font-size:14.5px;line-height:14.5px;color:#787878;letter-spacing:0.35px;right:407.50px;text-align:right;">979 KB</div>
<div class="t" style="top:438.63px;font-size:14.5px;line-height:14.5px;color:#787878;letter-spacing:0.35px;left:1266.40px;">PDF Document</div>
<div class="t" style="top:438.63px;font-size:14.5px;line-height:14.5px;color:#787878;letter-spacing:0.35px;left:1396.00px;">28 Nov 2025 at 7:46 PM</div>
<svg class="r" style="left:226px;top:460.54999999999995px" width="14" height="16" viewBox="0 0 14 16"><rect x="1" y="0.5" width="12" height="15" fill="#f9f9f9" stroke="#e2e2e2" stroke-width="0.8"/><rect x="3.5" y="4" width="6.5" height="2" fill="#97b5ef"/><rect x="3.5" y="6.3" width="6.5" height="2" fill="#2e3550"/><rect x="4" y="8.5" width="5" height="1" fill="#9aa0b5"/><path d="M8 0.5V4" stroke="#c8c8c8" stroke-width="0.6"/></svg>
<div class="t" style="top:461.18px;font-size:14.5px;line-height:14.5px;color:#262626;letter-spacing:0.35px;left:249.60px;">zetwerk.in Mail - V44 Upgrade - D365.pdf</div>
<div class="t" style="top:461.18px;font-size:14.5px;line-height:14.5px;color:#787878;letter-spacing:0.35px;right:407.50px;text-align:right;">377 KB</div>
<div class="t" style="top:461.18px;font-size:14.5px;line-height:14.5px;color:#787878;letter-spacing:0.35px;left:1266.40px;">PDF Document</div>
<div class="t" style="top:461.18px;font-size:14.5px;line-height:14.5px;color:#787878;letter-spacing:0.35px;left:1396.00px;">27 Nov 2025 at 3:00 PM</div>
<div class="r" style="left:206.3px;top:479.60px;width:1391.7px;height:22px;border-radius:4px;background:#f4f4f5"></div>
<svg class="r" style="left:226px;top:483.1px" width="14" height="16" viewBox="0 0 14 16"><rect x="1" y="0.5" width="12" height="15" fill="#f9f9f9" stroke="#e2e2e2" stroke-width="0.8"/><rect x="3.5" y="4" width="6.5" height="2" fill="#97b5ef"/><rect x="3.5" y="6.3" width="6.5" height="2" fill="#2e3550"/><rect x="4" y="8.5" width="5" height="1" fill="#9aa0b5"/><path d="M8 0.5V4" stroke="#c8c8c8" stroke-width="0.6"/></svg>
<div class="t" style="top:483.73px;font-size:14.5px;line-height:14.5px;color:#262626;letter-spacing:0.35px;left:249.60px;">zetwerk.in Mail - CR Discussion – XDS Policy for Fiscal Monthly Calendar-wise Transaction View Restriction.pdf</div>
<div class="t" style="top:483.73px;font-size:14.5px;line-height:14.5px;color:#787878;letter-spacing:0.35px;right:407.50px;text-align:right;">903 KB</div>
<div class="t" style="top:483.73px;font-size:14.5px;line-height:14.5px;color:#787878;letter-spacing:0.35px;left:1266.40px;">PDF Document</div>
<div class="t" style="top:483.73px;font-size:14.5px;line-height:14.5px;color:#787878;letter-spacing:0.35px;left:1396.00px;">23 Nov 2025 at 12:00 PM</div>
<svg class="r" style="left:226px;top:505.65px" width="14" height="16" viewBox="0 0 14 16"><rect x="1" y="0.5" width="12" height="15" fill="#f9f9f9" stroke="#e2e2e2" stroke-width="0.8"/><rect x="3.5" y="4" width="6.5" height="2" fill="#97b5ef"/><rect x="3.5" y="6.3" width="6.5" height="2" fill="#2e3550"/><rect x="4" y="8.5" width="5" height="1" fill="#9aa0b5"/><path d="M8 0.5V4" stroke="#c8c8c8" stroke-width="0.6"/></svg>
<div class="t" style="top:506.28px;font-size:14.5px;line-height:14.5px;color:#262626;letter-spacing:0.35px;left:249.60px;">Sr. 10 Data part 3 Mail to IT Team.pdf</div>
<div class="t" style="top:506.28px;font-size:14.5px;line-height:14.5px;color:#787878;letter-spacing:0.35px;right:407.50px;text-align:right;">388 KB</div>
<div class="t" style="top:506.28px;font-size:14.5px;line-height:14.5px;color:#787878;letter-spacing:0.35px;left:1266.40px;">PDF Document</div>
<div class="t" style="top:506.28px;font-size:14.5px;line-height:14.5px;color:#787878;letter-spacing:0.35px;left:1396.00px;">20 Nov 2025 at 1:30 PM</div>
<div class="r" style="left:206.3px;top:524.70px;width:1391.7px;height:22px;border-radius:4px;background:#f4f4f5"></div>
<svg class="r" style="left:226px;top:528.2px" width="14" height="16" viewBox="0 0 14 16"><rect x="1" y="0.5" width="12" height="15" fill="#f9f9f9" stroke="#e2e2e2" stroke-width="0.8"/><rect x="3.5" y="4" width="6.5" height="2" fill="#97b5ef"/><rect x="3.5" y="6.3" width="6.5" height="2" fill="#2e3550"/><rect x="4" y="8.5" width="5" height="1" fill="#9aa0b5"/><path d="M8 0.5V4" stroke="#c8c8c8" stroke-width="0.6"/></svg>
<div class="t" style="top:528.83px;font-size:14.5px;line-height:14.5px;color:#262626;letter-spacing:0.35px;left:249.60px;">Sr. 10 Data part 2 HR Mail.pdf</div>
<div class="t" style="top:528.83px;font-size:14.5px;line-height:14.5px;color:#787878;letter-spacing:0.35px;right:407.50px;text-align:right;">513 KB</div>
<div class="t" style="top:528.83px;font-size:14.5px;line-height:14.5px;color:#787878;letter-spacing:0.35px;left:1266.40px;">PDF Document</div>
<div class="t" style="top:528.83px;font-size:14.5px;line-height:14.5px;color:#787878;letter-spacing:0.35px;left:1396.00px;">20 Nov 2025 at 1:30 PM</div>
<svg class="r" style="left:226px;top:550.75px" width="14" height="16" viewBox="0 0 14 16"><rect x="1" y="0.5" width="12" height="15" fill="#f9f9f9" stroke="#e2e2e2" stroke-width="0.8"/><rect x="3.5" y="4" width="6.5" height="2" fill="#97b5ef"/><rect x="3.5" y="6.3" width="6.5" height="2" fill="#2e3550"/><rect x="4" y="8.5" width="5" height="1" fill="#9aa0b5"/><path d="M8 0.5V4" stroke="#c8c8c8" stroke-width="0.6"/></svg>
<div class="t" style="top:551.38px;font-size:14.5px;line-height:14.5px;color:#262626;letter-spacing:0.35px;left:249.60px;">3.pdf</div>
<div class="t" style="top:551.38px;font-size:14.5px;line-height:14.5px;color:#787878;letter-spacing:0.35px;right:407.50px;text-align:right;">83 KB</div>
<div class="t" style="top:551.38px;font-size:14.5px;line-height:14.5px;color:#787878;letter-spacing:0.35px;left:1266.40px;">PDF Document</div>
<div class="t" style="top:551.38px;font-size:14.5px;line-height:14.5px;color:#787878;letter-spacing:0.35px;left:1396.00px;">12 Nov 2025 at 2:54 PM</div>
<div class="r" style="left:206.3px;top:569.80px;width:1391.7px;height:22px;border-radius:4px;background:#f4f4f5"></div>
<svg class="r" style="left:226px;top:573.3px" width="14" height="16" viewBox="0 0 14 16"><rect x="1" y="0.5" width="12" height="15" fill="#f9f9f9" stroke="#e2e2e2" stroke-width="0.8"/><rect x="3.5" y="4" width="6.5" height="2" fill="#97b5ef"/><rect x="3.5" y="6.3" width="6.5" height="2" fill="#2e3550"/><rect x="4" y="8.5" width="5" height="1" fill="#9aa0b5"/><path d="M8 0.5V4" stroke="#c8c8c8" stroke-width="0.6"/></svg>
<div class="t" style="top:573.93px;font-size:14.5px;line-height:14.5px;color:#262626;letter-spacing:0.35px;left:249.60px;">2.pdf</div>
<div class="t" style="top:573.93px;font-size:14.5px;line-height:14.5px;color:#787878;letter-spacing:0.35px;right:407.50px;text-align:right;">83 KB</div>
<div class="t" style="top:573.93px;font-size:14.5px;line-height:14.5px;color:#787878;letter-spacing:0.35px;left:1266.40px;">PDF Document</div>
<div class="t" style="top:573.93px;font-size:14.5px;line-height:14.5px;color:#787878;letter-spacing:0.35px;left:1396.00px;">12 Nov 2025 at 2:54 PM</div>
<div class="t" style="top:629.97px;font-size:12.2px;line-height:12.2px;color:#8e8e8e;font-weight:700;left:249.20px;">Spreadsheets</div>
<div class="r" style="left:206.3px;top:652.50px;width:1391.7px;height:22px;border-radius:4px;background:#f4f4f5"></div>
<svg class="r" style="left:224.5px;top:656.1px" width="18" height="17" viewBox="0 0 18 17"><rect x="1.6" y="0.6" width="15.4" height="13" rx="2.2" fill="#fff" stroke="#b9b9b9" stroke-width="1"/><rect x="7" y="2.5" width="7" height="9.5" fill="#4fd64a"/><rect x="9" y="4.5" width="4" height="7.5" fill="#137a22"/><rect x="0.3" y="8" width="7.6" height="7.6" rx="1.5" fill="#1a7a3c"/><path d="M2 9.8L6.2 13.9M6.2 9.8L2 13.9" stroke="#d6f5df" stroke-width="1.3"/></svg>
<div class="t" style="top:656.63px;font-size:14.5px;line-height:14.5px;color:#262626;letter-spacing:0.35px;left:249.60px;">req (3).xlsx</div>
<div class="t" style="top:656.63px;font-size:14.5px;line-height:14.5px;color:#787878;letter-spacing:0.35px;right:407.50px;text-align:right;">1.9 MB</div>
<div class="t" style="top:656.63px;font-size:14.5px;line-height:14.5px;color:#787878;letter-spacing:0.35px;left:1266.40px;">Micros…k (.xlsx)</div>
<div class="t" style="top:656.63px;font-size:14.5px;line-height:14.5px;color:#787878;letter-spacing:0.35px;left:1396.00px;">25 Nov 2025 at 10:08 AM</div>
<svg class="r" style="left:224.5px;top:678.65px" width="18" height="17" viewBox="0 0 18 17"><rect x="1.6" y="0.6" width="15.4" height="13" rx="2.2" fill="#fff" stroke="#b9b9b9" stroke-width="1"/><rect x="7" y="2.5" width="7" height="9.5" fill="#4fd64a"/><rect x="9" y="4.5" width="4" height="7.5" fill="#137a22"/><rect x="0.3" y="8" width="7.6" height="7.6" rx="1.5" fill="#1a7a3c"/><path d="M2 9.8L6.2 13.9M6.2 9.8L2 13.9" stroke="#d6f5df" stroke-width="1.3"/></svg>
<div class="t" style="top:679.18px;font-size:14.5px;line-height:14.5px;color:#262626;letter-spacing:0.35px;left:249.60px;">Project Gange_Select Risk Factor Tracker Response 20.11.25 (1).xlsx</div>
<div class="t" style="top:679.18px;font-size:14.5px;line-height:14.5px;color:#787878;letter-spacing:0.35px;right:407.50px;text-align:right;">10 KB</div>
<div class="t" style="top:679.18px;font-size:14.5px;line-height:14.5px;color:#787878;letter-spacing:0.35px;left:1266.40px;">Micros…k (.xlsx)</div>
<div class="t" style="top:679.18px;font-size:14.5px;line-height:14.5px;color:#787878;letter-spacing:0.35px;left:1396.00px;">21 Nov 2025 at 9:54 PM</div>
<div class="r" style="left:206.3px;top:697.60px;width:1391.7px;height:22px;border-radius:4px;background:#f4f4f5"></div>
<svg class="r" style="left:224.5px;top:701.2px" width="18" height="17" viewBox="0 0 18 17"><rect x="1.6" y="0.6" width="15.4" height="13" rx="2.2" fill="#fff" stroke="#b9b9b9" stroke-width="1"/><rect x="7" y="2.5" width="7" height="9.5" fill="#4fd64a"/><rect x="9" y="4.5" width="4" height="7.5" fill="#137a22"/><rect x="0.3" y="8" width="7.6" height="7.6" rx="1.5" fill="#1a7a3c"/><path d="M2 9.8L6.2 13.9M6.2 9.8L2 13.9" stroke="#d6f5df" stroke-width="1.3"/></svg>
<div class="t" style="top:701.73px;font-size:14.5px;line-height:14.5px;color:#262626;letter-spacing:0.35px;left:249.60px;">Sr. 10 Data part 4 Mapping sheet.xlsx</div>
<div class="t" style="top:701.73px;font-size:14.5px;line-height:14.5px;color:#787878;letter-spacing:0.35px;right:407.50px;text-align:right;">31 KB</div>
<div class="t" style="top:701.73px;font-size:14.5px;line-height:14.5px;color:#787878;letter-spacing:0.35px;left:1266.40px;">Micros…k (.xlsx)</div>
<div class="t" style="top:701.73px;font-size:14.5px;line-height:14.5px;color:#787878;letter-spacing:0.35px;left:1396.00px;">20 Nov 2025 at 1:31 PM</div>
</div>
<div class="r" style="left:196px;top:1004px;width:1414px;height:1px;background:#e6e6e6;"></div>
<div class="r" style="left:1415.6px;top:1027.7px;width:82.10000000000014px;height:23.299999999999955px;border-radius:6px;background:#fff;box-shadow:0 0 0 0.5px rgba(0,0,0,0.07),0 0.8px 1.8px rgba(0,0,0,0.13);"></div>
<div class="t" style="top:1031.20px;font-size:15px;line-height:15px;color:#262626;left:1256.60px;width:400px;text-align:center;">Cancel</div>
<div class="r" style="left:1506.6px;top:1028.3px;width:81px;height:22.3px;border-radius:6px;background:linear-gradient(#2d8cf8,#1676f1);box-shadow:0 0.5px 1px rgba(0,0,0,0.2)"></div>
<div class="t" style="top:1031.20px;font-size:15px;line-height:15px;color:#ffffff;left:1347.00px;width:400px;text-align:center;">Open</div>
<div class="r" style="left:509.5px;top:1017px;width:641.5px;height:53.3px;background:#fff;border-radius:0;box-shadow:0 0 0 0.6px rgba(0,0,0,0.18),0 1px 4px rgba(0,0,0,0.22)"></div>
<div class="r" style="left:521.3px;top:1037px;width:1.8px;height:11.5px;background:#c9c9c9;"></div>
<div class="r" style="left:525.3px;top:1037px;width:1.8px;height:11.5px;background:#c9c9c9;"></div>
<div class="t" style="top:1036.58px;font-size:14.2px;line-height:14.2px;color:#2b2b2b;letter-spacing:-0.01px;left:540.00px;">Trupeer AI Screen Recorder &amp; Video Editor is sharing your screen.</div>
<div class="r" style="left:970.7px;top:1023.9px;width:126px;height:40px;border-radius:20px;background:#e6e6e6"></div>
<div class="t" style="top:1036.13px;font-size:15.8px;line-height:15.8px;color:#666666;left:833.60px;width:400px;text-align:center;">Stop sharing</div>
<div class="t" style="top:1035.90px;font-size:15px;line-height:15px;color:#1a5fd6;left:1108.70px;text-decoration:underline;">Hide</div>
<svg class="r" style="left:1050px;top:850px" width="30" height="30" viewBox="1050 850 30 30"><path d="M1059.8 858L1059.8 870.6L1062.8 867.7L1065.1 873.7L1067.8 872.7L1065.5 866.9L1069.4 866.8Z" fill="#000" stroke="#fff" stroke-width="0.9" stroke-linejoin="round"/></svg>
</body></html>
